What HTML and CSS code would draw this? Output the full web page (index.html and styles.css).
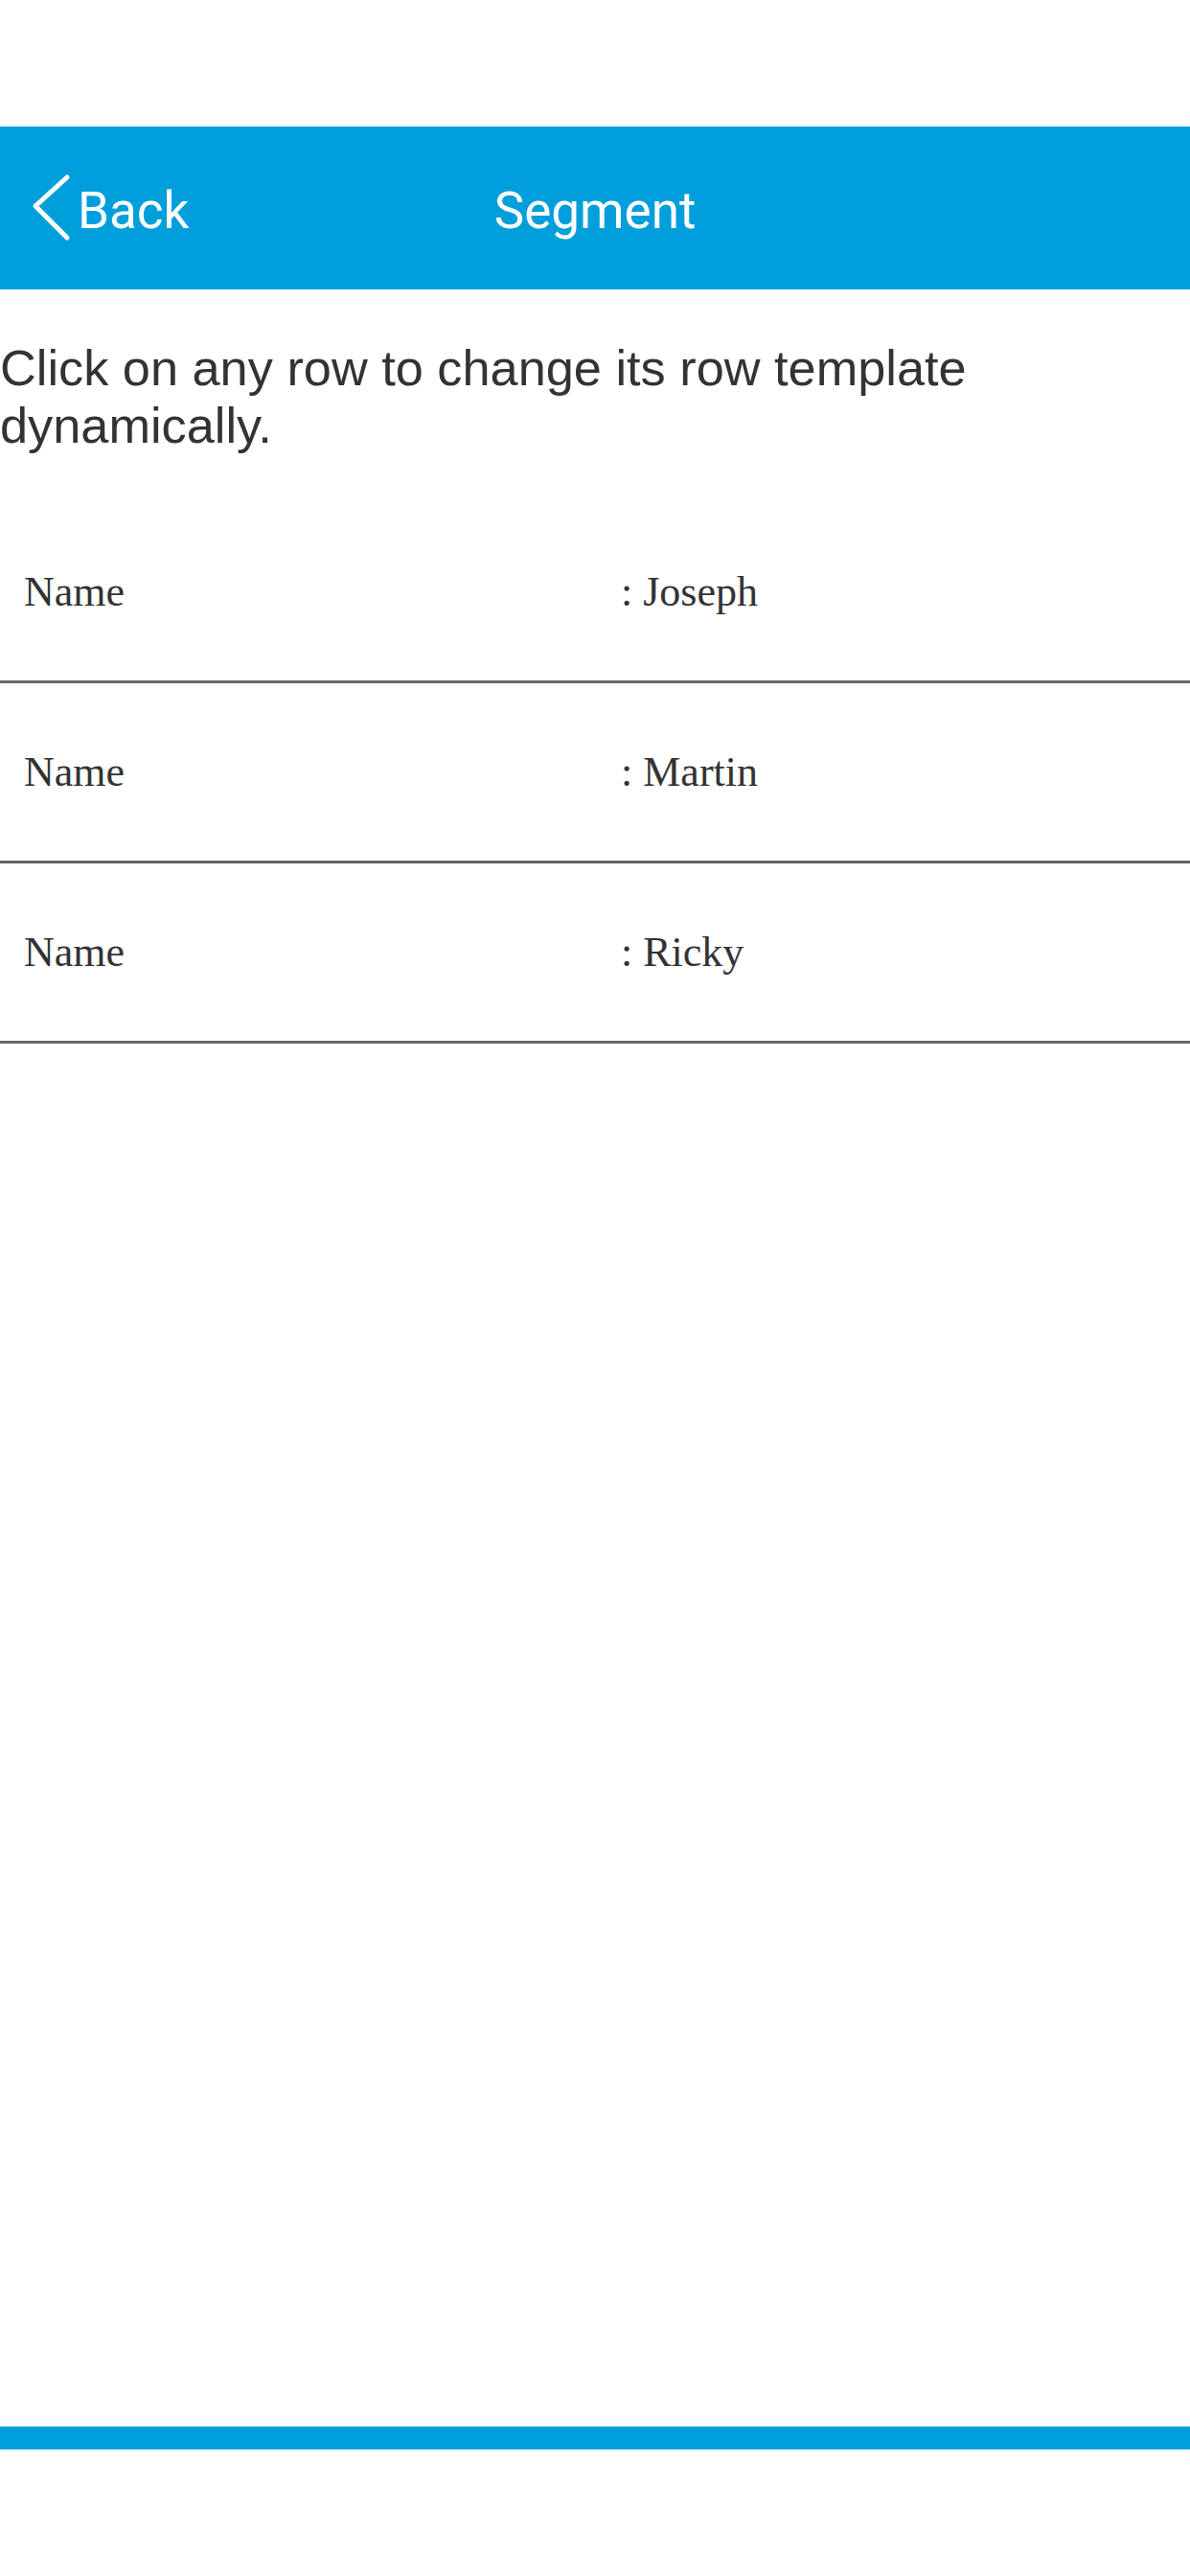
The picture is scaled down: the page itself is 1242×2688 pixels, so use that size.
FILE: index.html
```html
<!DOCTYPE html>
<html lang="en">
<head>
<meta charset="utf-8">
<title>Segment</title>
<link rel="stylesheet" href="styles.css">
</head>
<body>
<div class="app">
  <div class="status-space"></div>
  <header class="topbar">
    <div class="back">
      <svg class="chev" width="44" height="74" viewBox="0 0 44 74" aria-hidden="true">
        <polyline points="39,5 6,35 39,68" fill="none" stroke="#ffffff" stroke-width="5" stroke-linecap="round" stroke-linejoin="round"/>
      </svg>
      <span class="back-label">Back</span>
    </div>
    <div class="title">Segment</div>
    <div class="spacer"></div>
  </header>
  <main class="content">
    <p class="desc">Click on any row to change its row template dynamically.</p>
    <div class="list">
      <div class="row"><div class="cell">Name</div><div class="cell value">: Joseph</div></div>
      <div class="row"><div class="cell">Name</div><div class="cell value">: Martin</div></div>
      <div class="row"><div class="cell">Name</div><div class="cell value">: Ricky</div></div>
    </div>
  </main>
  <div class="bottom-bar"></div>
  <div class="bottom-space"></div>
</div>
</body>
</html>
```

FILE: styles.css
```css
html, body {
  margin: 0;
  padding: 0;
  background: #ffffff;
}
.app {
  width: 1242px;
  min-height: 2688px;
  display: flex;
  flex-direction: column;
}
.status-space {
  height: 132px;
  flex: none;
}
.topbar {
  height: 170px;
  flex: none;
  background: #009fdb;
  display: grid;
  grid-template-columns: 1fr auto 1fr;
  align-items: center;
  color: #ffffff;
  font-family: Roboto, "Liberation Sans", sans-serif;
}
.back {
  display: flex;
  align-items: center;
  padding-left: 31px;
  gap: 6px;
}
.chev {
  display: block;
  flex: none;
}
.back-label {
  font-size: 53px;
  line-height: 60px;
  padding-top: 5px;
}
.title {
  font-size: 53px;
  line-height: 60px;
  padding-top: 5px;
  text-align: center;
}
.content {
  flex: 1;
}
.desc {
  margin: 52px 0 0 0;
  font-family: "Liberation Sans", Arial, sans-serif;
  font-size: 52.3px;
  line-height: 60px;
  color: #333333;
}
.list {
  margin-top: 51px;
}
.row {
  height: 185px;
  border-bottom: 3px solid #666666;
  display: grid;
  grid-template-columns: 1fr 1fr;
  align-items: center;
  font-family: "Liberation Serif", "Times New Roman", serif;
  font-size: 44px;
  color: #333333;
}
.cell {
  padding-left: 25px;
}
.cell.value {
  padding-left: 27px;
}
.bottom-bar {
  height: 24px;
  flex: none;
  background: #009fdb;
}
.bottom-space {
  height: 132px;
  flex: none;
}
```
